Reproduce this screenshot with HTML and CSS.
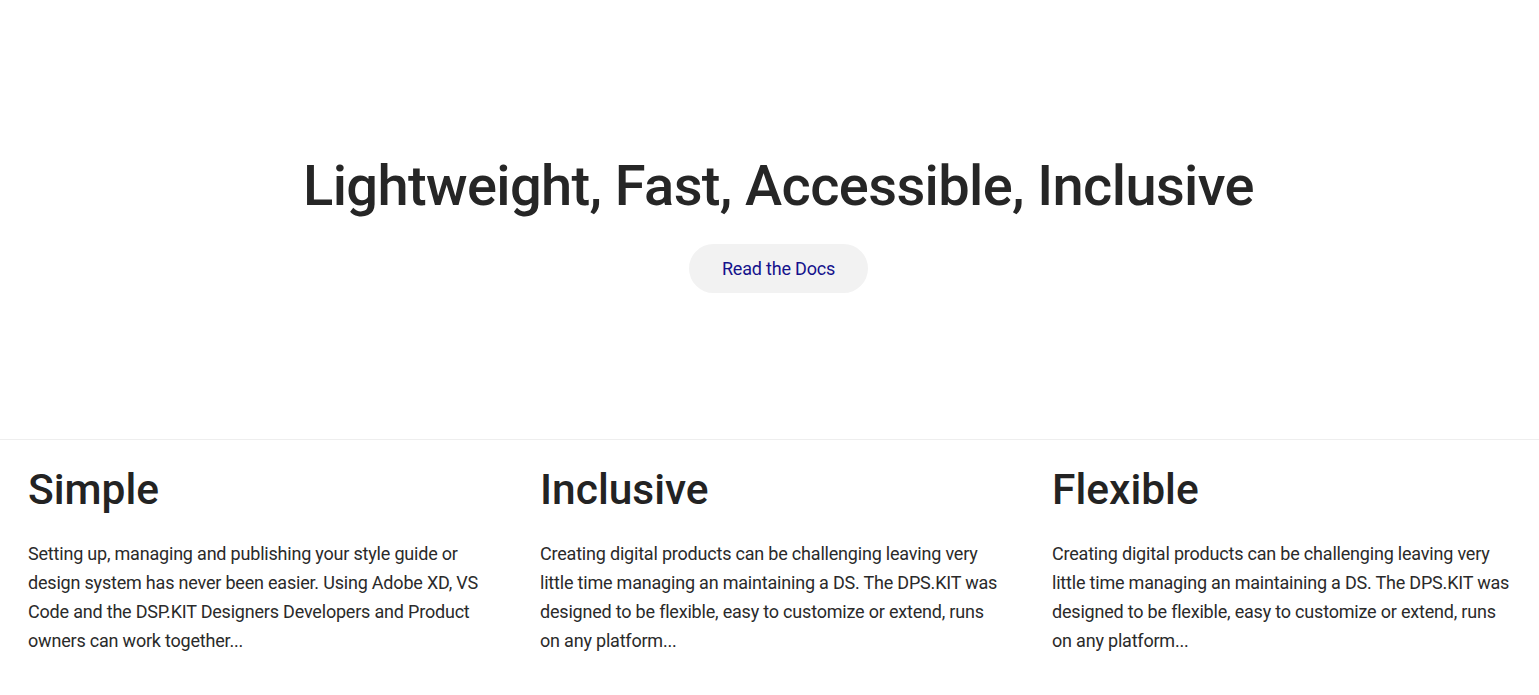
FILE: index.html
```html
<!DOCTYPE html>
<html lang="en">
<head>
<meta charset="utf-8">
<title>DSP.KIT</title>
<link rel="stylesheet" href="styles.css">
</head>
<body>
<section class="hero">
  <h1 class="hero-title">Lightweight, Fast, Accessible, Inclusive</h1>
  <a class="hero-button" href="#">Read the Docs</a>
</section>
<section class="features">
  <div class="feature">
    <h2 class="feature-title">Simple</h2>
    <p class="feature-text">Setting up, managing and publishing your style guide or design system has never been easier. Using Adobe XD, VS Code and the DSP.KIT Designers Developers and Product owners can work together...</p>
  </div>
  <div class="feature">
    <h2 class="feature-title">Inclusive</h2>
    <p class="feature-text">Creating digital products can be challenging leaving very little time managing an maintaining a DS. The DPS.KIT was designed to be flexible, easy to customize or extend, runs on any platform...</p>
  </div>
  <div class="feature">
    <h2 class="feature-title">Flexible</h2>
    <p class="feature-text">Creating digital products can be challenging leaving very little time managing an maintaining a DS. The DPS.KIT was designed to be flexible, easy to customize or extend, runs on any platform...</p>
  </div>
</section>
</body>
</html>
```
FILE: styles.css
```css
* { box-sizing: border-box; }
html, body { margin: 0; padding: 0; background: #fff; }
body {
  font-family: Roboto, "Liberation Sans", sans-serif;
  color: #222;
}
.hero {
  height: 440px;
  border-bottom: 1px solid #eeeeee;
  display: flex;
  flex-direction: column;
  align-items: center;
  padding-top: 150px;
  padding-left: 18px;
}
.hero-title {
  margin: 0;
  font-size: 56px;
  font-weight: 500;
  line-height: 72px;
  color: #262626;
  letter-spacing: -0.62px;
}
.hero-button {
  margin-top: 22px;
  display: inline-flex;
  align-items: center;
  justify-content: center;
  width: 179px;
  height: 49px;
  border-radius: 25px;
  background: #f2f2f2;
  color: #15128c;
  text-decoration: none;
  font-size: 18px;
  letter-spacing: -0.2px;
}
.features {
  display: grid;
  grid-template-columns: repeat(3, 512px);
}
.feature {
  padding: 20px 20px 0 28px;
}
.feature-title {
  margin: 0;
  font-size: 42.5px;
  font-weight: 500;
  line-height: 60px;
  color: #232323;
}
.feature-text {
  margin: 19px 0 0;
  font-size: 18px;
  line-height: 29px;
  color: #2a2a2a;
  letter-spacing: -0.2px;
}
```
